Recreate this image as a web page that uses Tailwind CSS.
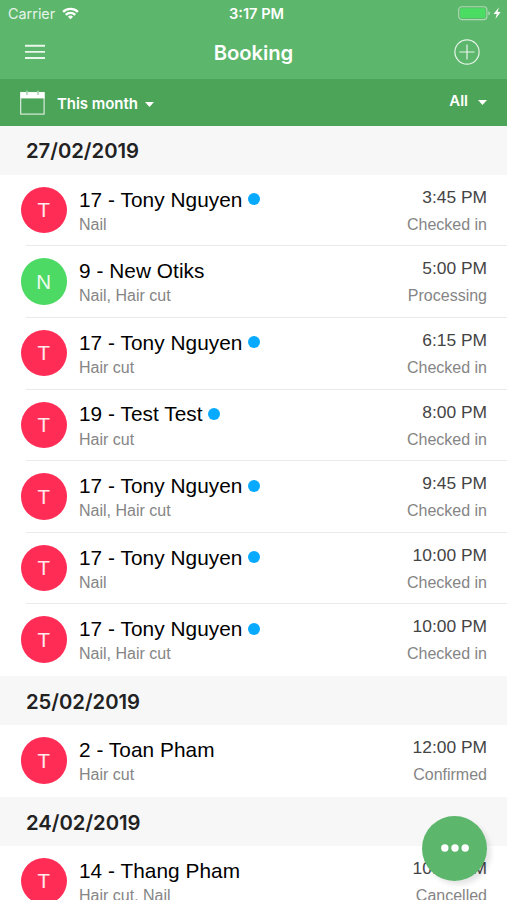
<!DOCTYPE html>
<html lang="en">
<head>
<meta charset="utf-8">
<title>Booking</title>
<script src="https://cdn.jsdelivr.net/npm/@tailwindcss/browser@4"></script>
</head>
<body class="bg-white">
<div class="relative h-[900px] w-[507px] overflow-hidden bg-white font-['Liberation_Sans',sans-serif]">
  <header class="bg-[#5cb66b] font-[Inter,sans-serif] text-white">
    <div class="grid h-[27px] grid-cols-3 items-center pr-[5px] pl-2">
      <div class="flex items-center gap-[7px]">
        <span class="text-[14.4px] text-white/85">Carrier</span>
        <svg class="h-[13px] w-[17px]" viewBox="0 0 18 14" fill="none" stroke="#fff" stroke-width="2.5"><path d="M1 5.3a11.6 11.6 0 0 1 16 0M3.9 8.4a7.4 7.4 0 0 1 10.2 0"/><path d="M9 13.2 6.2 10.5a4.1 4.1 0 0 1 5.6 0z" fill="#fff" stroke="none"/></svg>
      </div>
      <span class="pt-0.5 pl-[3px] text-center text-[14.6px] font-semibold whitespace-nowrap">3:17 PM</span>
      <svg class="h-[15px] w-[44px] justify-self-end" viewBox="0 0 44 15"><rect x=".7" y=".7" width="28.2" height="12.9" rx="3" fill="none" stroke="#fff" stroke-opacity=".5" stroke-width="1.1"/><rect x="2.2" y="2.2" width="25.2" height="9.9" rx="1.5" fill="#4bdc63"/><path d="M30.4 5q1.6.7 1.6 2.2t-1.6 2.2z" fill="#fff" fill-opacity=".5"/><path d="m41 1.3-5.4 6.6h3.2l-1.4 5 5.3-6.8h-3.2z" fill="#fff"/></svg>
    </div>
    <div class="grid h-[52px] grid-cols-3 items-center pr-[27px] pb-0.5 pl-[25px]">
      <svg class="h-4 w-5" viewBox="0 0 20 16" stroke="#fff" stroke-opacity=".88" stroke-width="1.9"><path d="M0 1.8h20M0 7.9h20M0 14h20"/></svg>
      <h1 class="pt-0.5 pl-0.5 text-center text-[20.3px] font-semibold tracking-[-0.1px]">Booking</h1>
      <svg class="h-[26px] w-[26px] justify-self-end" viewBox="0 0 26 26" fill="none" stroke="#fff" stroke-opacity=".85" stroke-width="1.2"><circle cx="13" cy="13" r="12.1"/><path d="M13 5.4v15.2M5.4 13h15.2"/></svg>
    </div>
    <div class="flex h-[46.5px] items-center justify-between bg-[#4ca458] pr-5 pl-5">
      <div class="flex items-center">
        <svg class="h-[25px] w-[25px]" viewBox="0 0 25 25"><rect x=".7" y="2.5" width="23.4" height="21.6" fill="none" stroke="#fff" stroke-opacity=".85" stroke-width="1.1"/><path d="M.5 2.4h24v6H.5z" fill="#fff"/><path d="M7 0v5M18 0v5" stroke="#4ca458" stroke-opacity=".6" stroke-width="2"/><path d="M7 .5v4.5M18 .5v4.5" stroke="#fff" stroke-opacity=".8" stroke-width=".9"/></svg>
        <span class="ml-[12px] pt-[3px] text-[15px] font-semibold tracking-[-0.05px]">This month</span>
        <svg class="mt-[5px] ml-[7px] h-[5px] w-[9px]" viewBox="0 0 9 5"><path d="M0 0h9L4.5 5z" fill="#fff"/></svg>
      </div>
      <div class="flex items-center pb-0.5">
        <span class="text-[15px] font-semibold">All</span>
        <svg class="mt-[3px] ml-[10px] h-[5px] w-[9px]" viewBox="0 0 9 5"><path d="M0 0h9L4.5 5z" fill="#fff"/></svg>
      </div>
    </div>
  </header>
  <main id="list"></main>
  <button class="absolute top-[815.5px] left-[422px] flex h-[65px] w-[65px] items-center justify-center rounded-full bg-[#5cb66b] shadow-[4px_4px_5px_rgba(0,0,0,0.1)]" aria-label="More">
    <svg class="h-2 w-7" viewBox="0 0 28 8" fill="#fff"><circle cx="3.8" cy="4" r="3.7"/><circle cx="14" cy="4" r="3.7"/><circle cx="24.2" cy="4" r="3.7"/></svg>
  </button>
</div>
<script>
const groups = [
  ['27/02/2019', [
    ['17 - Tony Nguyen', 'Nail', '3:45 PM', 'Checked in', true],
    ['9 - New Otiks', 'Nail, Hair cut', '5:00 PM', 'Processing', false],
    ['17 - Tony Nguyen', 'Hair cut', '6:15 PM', 'Checked in', true],
    ['19 - Test Test', 'Hair cut', '8:00 PM', 'Checked in', true],
    ['17 - Tony Nguyen', 'Nail, Hair cut', '9:45 PM', 'Checked in', true],
    ['17 - Tony Nguyen', 'Nail', '10:00 PM', 'Checked in', true],
    ['17 - Tony Nguyen', 'Nail, Hair cut', '10:00 PM', 'Checked in', true]]],
  ['25/02/2019', [['2 - Toan Pham', 'Hair cut', '12:00 PM', 'Confirmed', false]]],
  ['24/02/2019', [['14 - Thang Pham', 'Hair cut, Nail', '10:00 PM', 'Cancelled', false]]]
];
const row = ([name, service, time, status, dot], last) => {
  const initial = name.split(' - ')[1][0];
  const color = initial === 'N' ? 'bg-[#4cd964]' : 'bg-[#ff2d55]';
  return `<div class="relative flex h-[71.65px] pt-3 pr-5 pl-[20.5px]">
    <div class="flex h-[46.5px] w-[46.5px] shrink-0 items-center justify-center rounded-full pt-px text-[20.5px] text-white/90 ${color}">${initial}</div>
    <div class="ml-[12px] flex-1">
      <div class="flex h-[25px] items-center"><span class="text-[20.8px] tracking-[0.05px] whitespace-nowrap text-black">${name}</span>${dot ? '<span class="ml-[5.5px] h-3 w-3 rounded-full bg-[#08aaff]"></span>' : ''}</div>
      <div class="h-6 text-[16px] leading-[26px] text-[#858585]">${service}</div>
    </div>
    <div class="text-right whitespace-nowrap">
      <div class="h-[25px] text-[17.4px] leading-[21px] text-[#444]">${time}</div>
      <div class="h-6 text-[16px] leading-[26px] text-[#858585]">${status}</div>
    </div>
    ${last ? '' : '<div class="absolute right-0 bottom-0 left-[26px] h-px bg-[#e9e9e9]"></div>'}
  </div>`;
};
document.getElementById('list').innerHTML = groups.map(([date, rows]) =>
  `<section><h2 class="flex h-[49.1px] items-center bg-[#f7f7f7] pt-[3px] pl-[26px] font-[Inter,sans-serif] text-[20.3px] font-semibold tracking-[-0.03px] text-[#222]">${date}</h2>${rows.map((r, i) => row(r, i === rows.length - 1)).join('')}</section>`).join('');
</script>
</body>
</html>
